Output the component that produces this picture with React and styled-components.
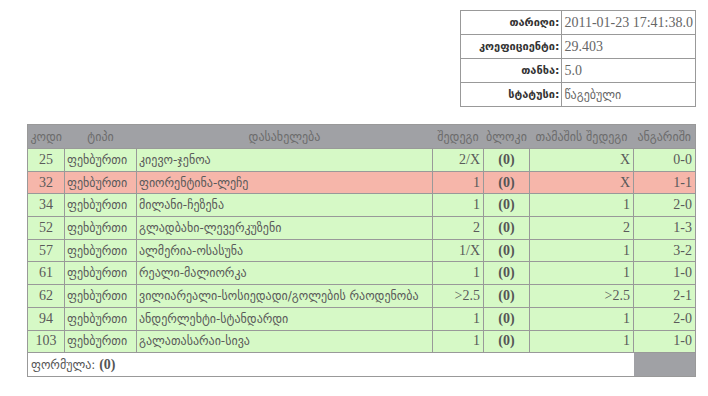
import React from 'react';
import styled, { createGlobalStyle } from 'styled-components';

const GlobalStyle = createGlobalStyle`
    body {
        margin: 0;
        background: #ffffff;
        font-family: "Liberation Serif", "DejaVu Sans", serif;
        font-size: 14px;
        color: #555;
    }
`

const Page = styled.div`
    width: 708px;
    height: 396px;
    box-sizing: border-box;
    padding: 10px 12px 0 28px;
    display: flex;
    flex-direction: column;
    align-items: flex-end;
    gap: 17px;
`

const InfoTable = styled.table`
    border-collapse: collapse;
    width: 236px;
    border: 1px solid #999;
`

const InfoRow = styled.tr`
    height: 24px;
`

const InfoLabel = styled.th`
    text-align: right;
    font-family: "DejaVu Sans", sans-serif;
    font-weight: bold;
    font-size: 11px;
    color: #333;
    padding: 0 2px;
    border: 1px solid #999;
    width: 99px;
    white-space: nowrap;
`

const InfoValue = styled.td`
    text-align: left;
    padding: 0 2px;
    border: 1px solid #999;
    color: #666;
    white-space: nowrap;
`

const Georgian = styled.span`
    font-family: "DejaVu Sans", sans-serif;
    font-size: 12px;
`

const MainTable = styled.table`
    border-collapse: collapse;
    width: 668px;
    border: 1px solid #999;
    table-layout: fixed;
`

const HeadRow = styled.tr`
    height: 24px;
`

const HeadCell = styled.th`
    background: #a0a1a5;
    color: #6c6c6c;
    font-family: "DejaVu Sans", sans-serif;
    font-weight: normal;
    font-size: 12px;
    padding: 0;
    text-align: center;
    white-space: nowrap;
    overflow: hidden;
`

const Row = styled.tr`
    height: 22.7px;
    background: ${p => (p.$lost ? '#f6b6aa' : '#d6f9c6')};
`

const Cell = styled.td`
    padding: 0 3px;
    border: 1px solid #999;
    text-align: ${p => p.$align || 'left'};
    color: #5a5a5a;
    white-space: nowrap;
    overflow: hidden;
`

const GeoCell = styled(Cell)`
    font-family: "DejaVu Sans", sans-serif;
    font-size: 12px;
    padding: 0 2px;
`

const Block = styled.b`
    color: #555;
`

const FormulaRow = styled.tr`
    height: 24px;
`

const FormulaCell = styled.td`
    background: #fff;
    padding: 0 3px;
    border-top: 1px solid #999;
`

const GrayCell = styled.td`
    background: #a0a1a5;
    border-top: 1px solid #999;
`

const info = [
    ['თარიღი:', '2011-01-23 17:41:38.0'],
    ['კოეფიციენტი:', '29.403'],
    ['თანხა:', '5.0'],
    ['სტატუსი:', null],
]

const rows = [
    { code: 25, name: 'კიევო-ჯენოა', result: '2/X', game: 'X', score: '0-0' },
    { code: 32, name: 'ფიორენტინა-ლეჩე', result: '1', game: 'X', score: '1-1', lost: true },
    { code: 34, name: 'მილანი-ჩეზენა', result: '1', game: '1', score: '2-0' },
    { code: 52, name: 'გლადბახი-ლევერკუზენი', result: '2', game: '2', score: '1-3' },
    { code: 57, name: 'ალმერია-ოსასუნა', result: '1/X', game: '1', score: '3-2' },
    { code: 61, name: 'რეალი-მალიორკა', result: '1', game: '1', score: '1-0' },
    { code: 62, name: 'ვილიარეალი-სოსიედადი/გოლების რაოდენობა', result: '>2.5', game: '>2.5', score: '2-1' },
    { code: 94, name: 'ანდერლეხტი-სტანდარდი', result: '1', game: '1', score: '2-0' },
    { code: 103, name: 'გალათასარაი-სივა', result: '1', game: '1', score: '1-0' },
]

const App = () => (
    <Page>
        <GlobalStyle />
        <InfoTable>
            <tbody>
                {info.map(([label, value]) => (
                    <InfoRow key={label}>
                        <InfoLabel>{label}</InfoLabel>
                        <InfoValue>{value || <Georgian>წაგებული</Georgian>}</InfoValue>
                    </InfoRow>
                ))}
            </tbody>
        </InfoTable>
        <MainTable>
            <colgroup>
                <col style={{ width: 37 }} />
                <col style={{ width: 72 }} />
                <col style={{ width: 296 }} />
                <col style={{ width: 51 }} />
                <col style={{ width: 46 }} />
                <col style={{ width: 104 }} />
                <col style={{ width: 62 }} />
            </colgroup>
            <thead>
                <HeadRow>
                    <HeadCell>კოდი</HeadCell>
                    <HeadCell>ტიპი</HeadCell>
                    <HeadCell>დასახელება</HeadCell>
                    <HeadCell>შედეგი</HeadCell>
                    <HeadCell>ბლოკი</HeadCell>
                    <HeadCell>თამაშის შედეგი</HeadCell>
                    <HeadCell>ანგარიში</HeadCell>
                </HeadRow>
            </thead>
            <tbody>
                {rows.map(r => (
                    <Row key={r.code} $lost={r.lost}>
                        <Cell $align='center'>{r.code}</Cell>
                        <GeoCell>ფეხბურთი</GeoCell>
                        <GeoCell>{r.name}</GeoCell>
                        <Cell $align='right'>{r.result}</Cell>
                        <Cell $align='center'><Block>(0)</Block></Cell>
                        <Cell $align='right'>{r.game}</Cell>
                        <Cell $align='right'>{r.score}</Cell>
                    </Row>
                ))}
                <FormulaRow>
                    <FormulaCell colSpan={6}>
                        <Georgian>ფორმულა: </Georgian><Block>(0)</Block>
                    </FormulaCell>
                    <GrayCell />
                </FormulaRow>
            </tbody>
        </MainTable>
    </Page>
);

export default App;
